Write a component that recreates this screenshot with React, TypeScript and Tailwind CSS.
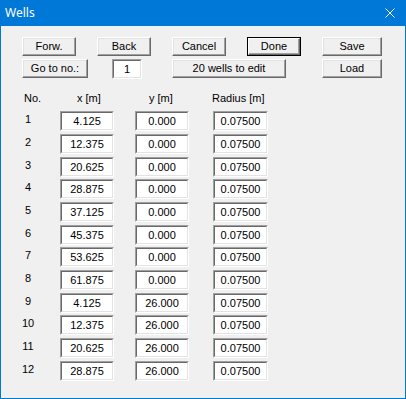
import React from "react";

const font = { fontFamily: '"Liberation Sans", Arial, sans-serif' };

function Btn({ label, w, def }: { label: string; w: string; def?: boolean }) {
  if (def) {
    return (
      <div className={`${w} h-[19px] border border-[#000000] bg-[#f0f0f0]`}>
        <div className="h-full w-full border-t border-l border-t-white border-l-white border-b border-r border-b-[#696969] border-r-[#696969] flex items-center justify-center text-[11px] text-black shadow-[inset_-1px_-1px_0_#a0a0a0]">
          {label}
        </div>
      </div>
    );
  }
  return (
    <div
      className={`${w} h-[19px] border-t border-l border-t-white border-l-white border-b border-r border-b-[#696969] border-r-[#696969] bg-[#f0f0f0] flex items-center justify-center text-[11px] text-black shadow-[inset_-1px_-1px_0_#a0a0a0,inset_1px_1px_0_#e3e3e3]`}
    >
      {label}
    </div>
  );
}

function Field({ value, w }: { value: string; w: string }) {
  return (
    <div className={`${w} h-[20px] border-t border-l border-t-[#a0a0a0] border-l-[#a0a0a0] border-b border-r border-b-white border-r-white`}>
      <div className="h-full w-full bg-white border-t border-l border-t-[#696969] border-l-[#696969] border-b border-r border-b-[#e3e3e3] border-r-[#e3e3e3] flex items-center justify-center text-[11px] text-black leading-none">
        {value}
      </div>
    </div>
  );
}

const rows = [
  ["1", "4.125", "0.000", "h-[23px]"],
  ["2", "12.375", "0.000", "h-[23px]"],
  ["3", "20.625", "0.000", "h-[22px]"],
  ["4", "28.875", "0.000", "h-[23px]"],
  ["5", "37.125", "0.000", "h-[23px]"],
  ["6", "45.375", "0.000", "h-[22px]"],
  ["7", "53.625", "0.000", "h-[23px]"],
  ["8", "61.875", "0.000", "h-[23px]"],
  ["9", "4.125", "26.000", "h-[22px]"],
  ["10", "12.375", "26.000", "h-[23px]"],
  ["11", "20.625", "26.000", "h-[23px]"],
  ["12", "28.875", "26.000", "h-[23px]"],
];

export default function App() {
  return (
    <div className="w-[406px] h-[399px] bg-[#0078d7] flex flex-col" style={font}>
      <div className="h-[26px] flex items-center justify-between pl-[5px] pr-[11px] shrink-0">
        <span className="text-white text-[12px]" style={{ fontFamily: '"Noto Sans", "Open Sans", sans-serif' }}>
          Wells
        </span>
        <svg width="10" height="10" viewBox="0 0 10 10" className="block">
          <path d="M0.5 0.5 L9.5 9.5 M9.5 0.5 L0.5 9.5" stroke="white" strokeWidth="1" fill="none" />
        </svg>
      </div>
      <div className="flex-1 mx-[1px] mb-[1px] bg-[#f0f0f0] pt-[11px] pl-[21px] flex flex-col">
        <div className="flex gap-[21px]">
          <Btn label="Forw." w="w-[54px]" />
          <Btn label="Back" w="w-[54px]" />
          <Btn label="Cancel" w="w-[54px]" />
          <Btn label="Done" w="w-[54px]" def />
          <Btn label="Save" w="w-[60px]" />
        </div>
        <div className="flex mt-[3px]">
          <Btn label="Go to no.:" w="w-[66px]" />
          <div className="ml-[24px]">
            <Field value="1" w="w-[30px]" />
          </div>
          <div className="ml-[30px]">
            <Btn label="20 wells to edit" w="w-[114px]" />
          </div>
          <div className="ml-[36px]">
            <Btn label="Load" w="w-[60px]" />
          </div>
        </div>
        <div className="flex mt-[12px] text-[11px] text-black h-[14px] items-center -ml-[21px]">
          <div className="w-[76px] pl-[23px]">No.</div>
          <div className="w-[72px]">x [m]</div>
          <div className="w-[63px]">y [m]</div>
          <div>Radius [m]</div>
        </div>
        <div className="flex flex-col mt-[6px] -ml-[21px]">
          {rows.map(([n, x, y, h]) => (
            <div key={n} className={`flex ${h}`}>
              <div className="w-[20px] ml-[17px] text-center text-[11px] leading-none text-black pt-[3px]">{n}</div>
              <div className="ml-[22px]">
                <Field value={x} w="w-[54px]" />
              </div>
              <div className="ml-[21px]">
                <Field value={y} w="w-[54px]" />
              </div>
              <div className="ml-[24px]">
                <Field value="0.07500" w="w-[55px]" />
              </div>
            </div>
          ))}
        </div>
      </div>
    </div>
  );
}
